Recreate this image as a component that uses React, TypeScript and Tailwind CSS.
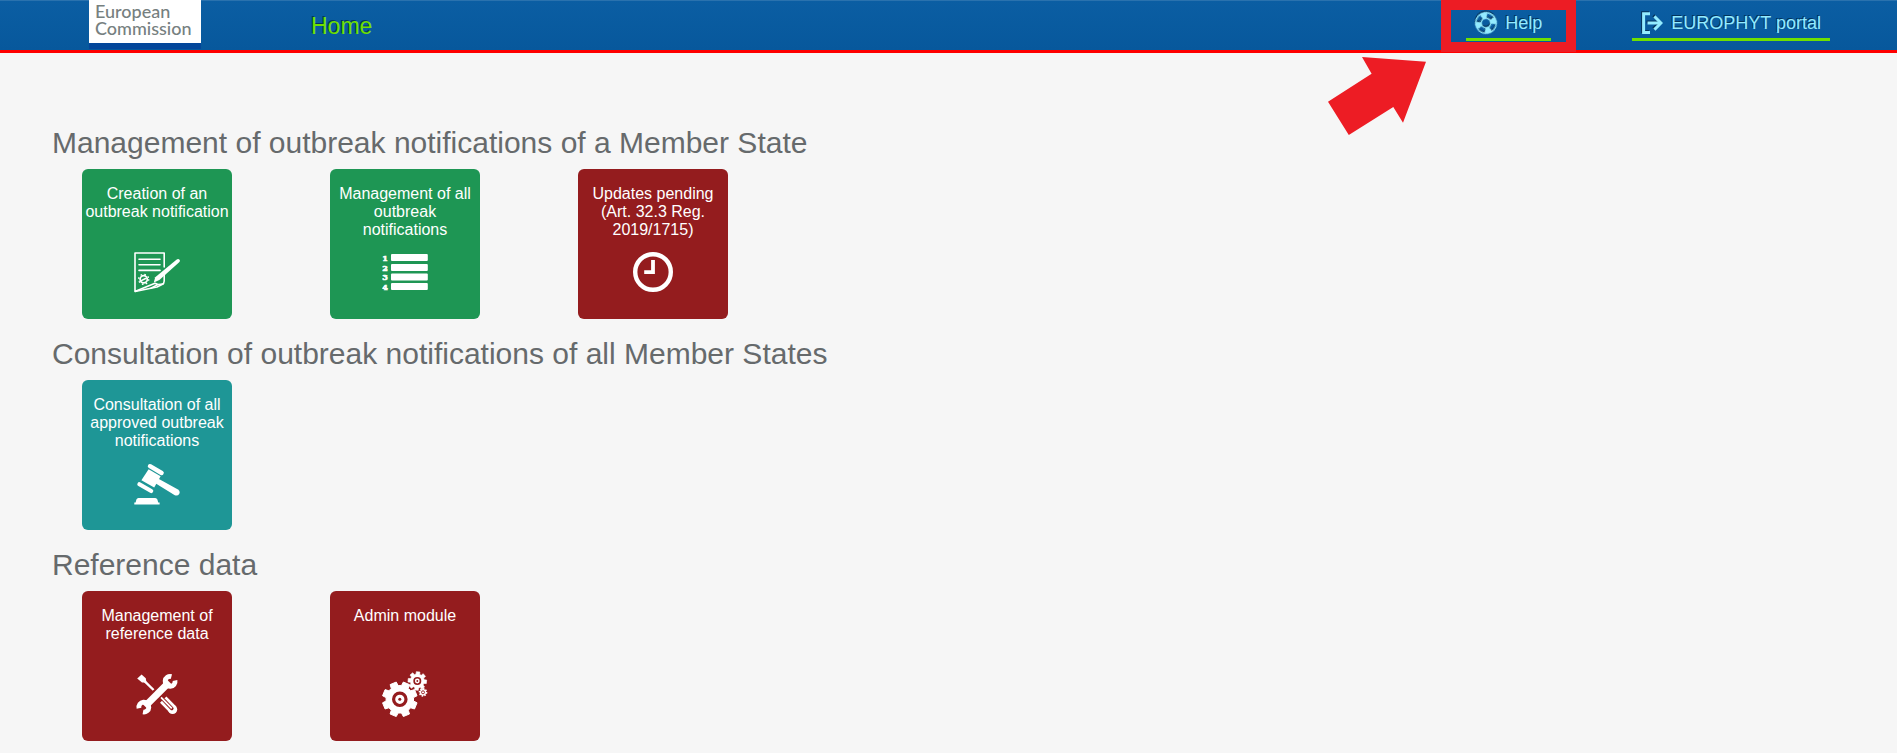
import type { ReactNode } from 'react'
import { ImLifebuoy } from 'react-icons/im'

interface Tile {
  label: string
  color: string
  icon: ReactNode
}

interface Section {
  title: string
  tiles: Tile[]
}

const GREEN = 'bg-[#1e9654]'
const RED = 'bg-[#941c1e]'
const TEAL = 'bg-[#1e9696]'

function gearPath(cx: number, cy: number, outer: number, root: number, turn: number) {
  const points: string[] = []
  for (let i = 0; i < 8; i++) {
    const mid = ((i * 45 + turn) * Math.PI) / 180
    const corners = [
      [-0.27, root],
      [-0.19, outer],
      [0.19, outer],
      [0.27, root],
    ]
    corners.forEach(([a, r]) => {
      points.push(`${(cx + r * Math.cos(mid + a)).toFixed(2)} ${(cy + r * Math.sin(mid + a)).toFixed(2)}`)
    })
  }
  return `M${points.join('L')}Z`
}

function TileIcon({ children }: { children: ReactNode }) {
  return (
    <svg viewBox="0 0 46 46" className="size-[46px]" fill="none" aria-hidden="true">
      {children}
    </svg>
  )
}

function FormIcon() {
  return (
    <TileIcon>
      <g stroke="white" strokeWidth="1.6" strokeLinejoin="round" strokeLinecap="round">
        <path d="M30.2 18V4H1v38.5L23 38l5-2.5q2.2-1 2.2-3.5V25" />
        <path d="M1.5 42.3 21 34.2l3 1.3-7 3.6M24 35.5l5-.5" />
        <path d="M5 10.3h21M5 15.8h21M5 21.4h21" />
      </g>
      <circle cx="9.7" cy="30.3" r="3.6" stroke="white" strokeWidth="1.7" />
      <circle cx="9.7" cy="30.3" r="5" stroke="white" strokeWidth="1.4" strokeDasharray="1.6 2.33" />
      <path d="m6.8 31.8 5.8-2.8" stroke="white" strokeWidth="1.4" />
      <path d="M42.4 10.7q2-1.4 3.1 0 1 1.4-.6 2.9L25.4 31l-5.6 2.6 1.4-5.4Z" fill="white" />
    </TileIcon>
  )
}

function NumberedListIcon() {
  return (
    <TileIcon>
      {[5, 15, 24.5, 34].map((y, i) => (
        <g key={y} fill="white">
          <rect x="9" y={y} width="36.8" height="7" rx="1" />
          <text
            x="3"
            y={y + 6.5}
            textAnchor="middle"
            className="font-['DejaVu_Serif'] text-[8px] font-bold"
            stroke="white"
            strokeWidth="0.6"
          >
            {i + 1}
          </text>
        </g>
      ))}
    </TileIcon>
  )
}

function ClockIcon() {
  return (
    <TileIcon>
      <circle cx="23" cy="23" r="17.8" stroke="white" strokeWidth="4.4" />
      <path d="M23 11v12.2h-8.8" stroke="white" strokeWidth="3.8" />
    </TileIcon>
  )
}

function GavelIcon() {
  return (
    <TileIcon>
      <g stroke="white" strokeLinecap="round">
        <path d="m16 6.2 11.6 6.8" strokeWidth="4.4" />
        <path d="m5.4 24.2 11.8 6.8" strokeWidth="4.2" />
      </g>
      <path d="m14.6 9.2 12 7-6.4 11.4-12.8-7.4Z" fill="white" />
      <path d="m24 18.6 20 11q2.6 1.8 1.2 4.4-1.6 2.4-4.4 1.2L21.8 23.4Z" fill="white" />
      <path d="M4.4 38h16.8q1.6 0 2.2 1.6l.8 2.8h1.4v2.2H.3v-2.2h1.3l.8-2.8Q3 38 4.4 38Z" fill="white" />
    </TileIcon>
  )
}

function ToolsIcon() {
  return (
    <TileIcon>
      <path d="m3.2 7.4 4.4-4 4.2 3.8.6 4.2-4.4.2Z" fill="white" />
      <path d="m10 9.6 9.6 9.4" stroke="white" strokeWidth="2.4" />
      <path d="m29.2 28.6 9.6 9.8" stroke="white" strokeWidth="9" />
      <circle cx="38.6" cy="38.4" r="4.6" fill="white" />
      <path d="m29.4 28.8 8.4 8.6" stroke="#941c1e" strokeWidth="3.6" strokeLinecap="round" />
      <path d="m27 26.4 10.8 11" stroke="white" strokeWidth="1.8" />
      <path d="M12 34 34 12" stroke="#941c1e" strokeWidth="9.5" />
      <path d="M11 35.4 35.4 11" stroke="white" strokeWidth="7" />
      <path d="M37.4 5.6A5 5 0 1 0 41 9.4" stroke="white" strokeWidth="4.8" />
      <path d="M5 37.2A5 5 0 1 1 9 41" stroke="white" strokeWidth="4.8" />
    </TileIcon>
  )
}

function GearsIcon() {
  return (
    <TileIcon>
      <path d={gearPath(17.8, 28.3, 17.6, 13.8, 22.5)} fill="white" stroke="white" strokeLinejoin="round" />
      <circle cx="17.8" cy="28.3" r="6.2" stroke="#941c1e" strokeWidth="3.2" />
      <circle cx="17.8" cy="28.3" r="1.5" fill="#941c1e" />
      <path d={gearPath(35.3, 10, 9.4, 7, 5)} fill="white" stroke="white" strokeWidth="0.6" />
      <circle cx="35.3" cy="10" r="3.2" stroke="#941c1e" strokeWidth="1.6" />
      <circle cx="35.3" cy="10" r="0.9" fill="#941c1e" />
      <path d={gearPath(41, 21.3, 4.4, 3.2, 10)} fill="white" />
      <circle cx="41" cy="21.3" r="1.5" stroke="#941c1e" strokeWidth="0.9" />
    </TileIcon>
  )
}

function ExitIcon() {
  return (
    <svg
      viewBox="0 0 22 22"
      className="size-[22px] shrink-0 drop-shadow-[-1px_-1px_0_#04335c]"
      fill="none"
      stroke="currentColor"
      aria-hidden="true"
    >
      <path d="M9 1.8H2.6v18.6H9" strokeWidth="3" />
      <path d="M6.5 11H19" strokeWidth="3" />
      <path d="m13.4 4.4 6.6 6.6-6.6 6.6" strokeWidth="3" />
    </svg>
  )
}

const SECTIONS: Section[] = [
  {
    title: 'Management of outbreak notifications of a Member State',
    tiles: [
      { label: 'Creation of an outbreak notification', color: GREEN, icon: <FormIcon /> },
      { label: 'Management of all outbreak notifications', color: GREEN, icon: <NumberedListIcon /> },
      { label: 'Updates pending (Art. 32.3 Reg. 2019/1715)', color: RED, icon: <ClockIcon /> },
    ],
  },
  {
    title: 'Consultation of outbreak notifications of all Member States',
    tiles: [{ label: 'Consultation of all approved outbreak notifications', color: TEAL, icon: <GavelIcon /> }],
  },
  {
    title: 'Reference data',
    tiles: [
      { label: 'Management of reference data', color: RED, icon: <ToolsIcon /> },
      { label: 'Admin module', color: RED, icon: <GearsIcon /> },
    ],
  },
]

const NAV_LINK =
  'flex h-[41px] items-center gap-2 border-b-3 border-[#6fe000] px-[9px] pt-2 text-lg text-[#93ebff] [text-shadow:-1px_-1px_0_#04335c]'

function Header() {
  return (
    <header className="flex h-[53px] items-start border-b-3 border-[#ff0000] bg-linear-to-b from-[#0b5ea3] to-[#07589c] pr-[67px] pl-[89px] shadow-[inset_0_1px_0_#2a72ae]">
      <div className="h-[43px] w-28 bg-white pt-[3px] pl-[6px] font-['Lato',sans-serif] text-lg leading-[17px] font-medium text-[#76807f] shadow-[0_6px_0_#03469a]">
        European Commission
      </div>
      <a href="#home" className="ml-[110px] pt-[11px] text-[23px] leading-[30px] text-[#6fe000] [text-shadow:-1px_-1px_0_#04335c]">
        Home
      </a>
      <nav className="ml-auto flex gap-[81px]">
        <div className="relative">
          <a href="#help" className={NAV_LINK}>
            <ImLifebuoy className="size-[22px] shrink-0 rotate-30 drop-shadow-[-1px_-1px_0_#04335c]" aria-hidden="true" />
            Help
          </a>
          <div className="pointer-events-none absolute -inset-x-[25px] top-0 h-[52px] border-10 border-[#ed1c24]" />
          <svg
            viewBox="0 0 98 78"
            className="pointer-events-none absolute top-[57px] right-[125px] h-[78px] w-[98px]"
            aria-hidden="true"
          >
            <path d="M34 0 98 4.7 75 65.7 65.3 50 20.8 78 0 44.7 43.6 16.7Z" fill="#ed1c24" />
          </svg>
        </div>
        <a href="#portal" className={NAV_LINK}>
          <ExitIcon />
          EUROPHYT portal
        </a>
      </nav>
    </header>
  )
}

export default function App() {
  return (
    <div className="min-h-screen bg-[#f6f6f6] font-['Liberation_Sans',Arial,sans-serif]">
      <Header />
      <main className="flex flex-col gap-[17px] px-[52px] pt-[72px]">
        {SECTIONS.map((section) => (
          <section key={section.title}>
            <h2 className="text-[30px] leading-9 text-[#666a6c]">{section.title}</h2>
            <div className="mt-2 flex flex-wrap gap-x-[98px] gap-y-4 pl-[30px]">
              {section.tiles.map((tile) => (
                <button
                  key={tile.label}
                  type="button"
                  className={`flex size-[150px] flex-col items-center justify-start rounded-md pt-4 text-white ${tile.color}`}
                >
                  <span className="h-16 px-px text-base leading-[18px]">{tile.label}</span>
                  {tile.icon}
                </button>
              ))}
            </div>
          </section>
        ))}
      </main>
    </div>
  )
}
